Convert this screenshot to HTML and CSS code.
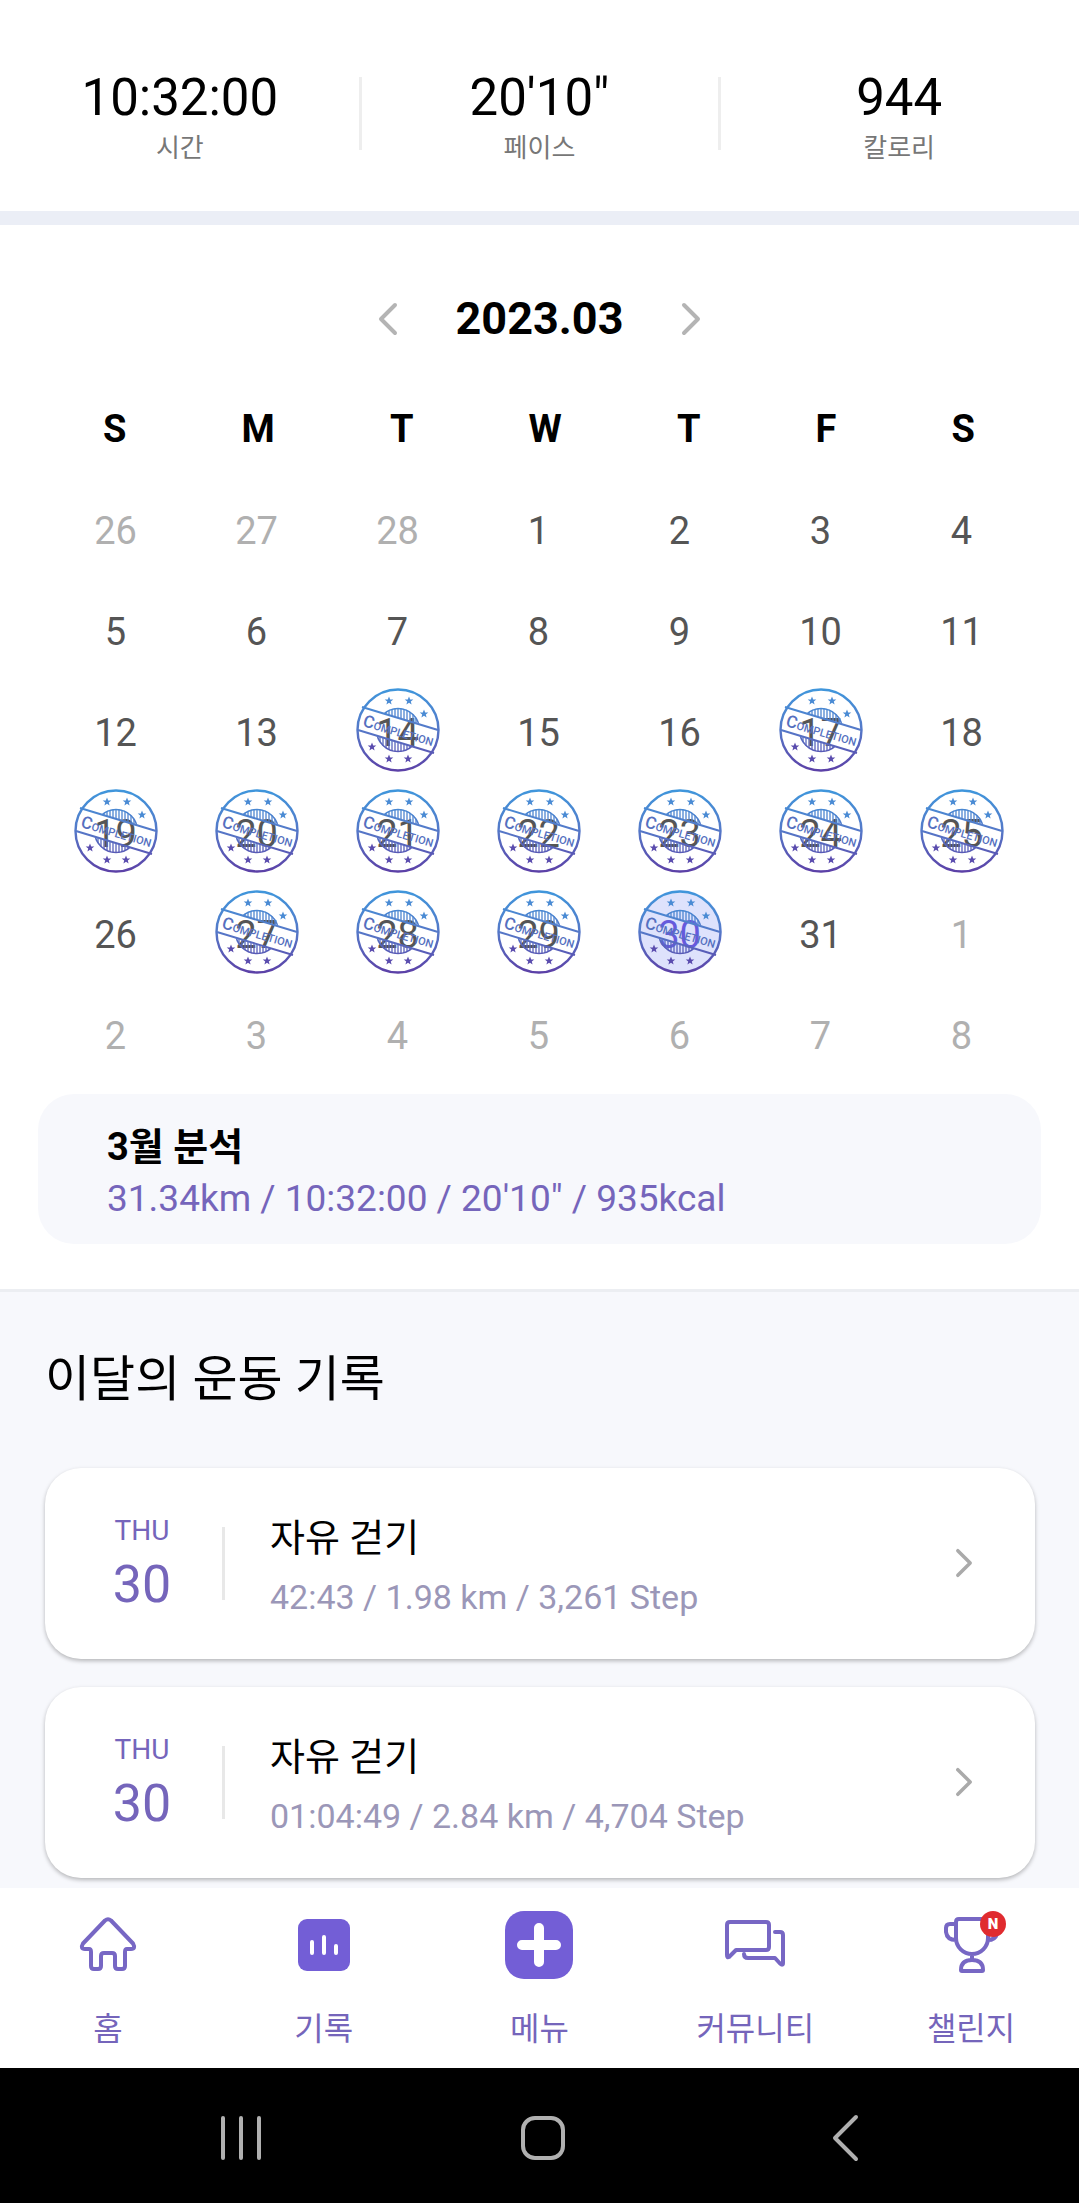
FILE: index.html
```html
<!DOCTYPE html>
<html lang="ko">
<head>
<meta charset="utf-8">
<meta name="viewport" content="width=device-width, initial-scale=1">
<title>운동 기록</title>
<link rel="stylesheet" href="styles.css">
</head>
<body>
<svg class="defs" aria-hidden="true">
  <defs>
    <linearGradient id="ink" gradientUnits="userSpaceOnUse" x1="0" y1="0" x2="0" y2="84">
      <stop offset="0" stop-color="#3f97dc"/>
      <stop offset="0.5" stop-color="#5578c8"/>
      <stop offset="1" stop-color="#5c3fa6"/>
    </linearGradient>
    <clipPath id="outside-band"><path d="M0 0H84V42L0 17ZM0 42L84 67V84H0Z"/></clipPath>
    <clipPath id="seal"><circle cx="42" cy="42" r="22"/></clipPath>
    <path id="star" d="M0-4.500L1.200-1.500L4.300-1.400L1.800 .6L2.600 3.600L0 1.800L-2.600 3.600L-1.800 .6L-4.300-1.400L-1.200-1.500Z"/>
    <symbol id="stamp" viewBox="0 0 84 84">
      <g fill="none" stroke="url(#ink)">
        <circle cx="42" cy="42" r="40.500" stroke-width="2.400"/>
        <path d="M6 19L82 42M2 42L78 65" stroke-width="2"/>
        <g clip-path="url(#outside-band)">
          <circle cx="42" cy="42" r="21.500" stroke-width="1.600"/>
          <path clip-path="url(#seal)" stroke-width="1.300" d="M24 20V64M27 20V64M30 20V64M33 20V64M36 20V64M39 20V64M42 20V64M45 20V64M48 20V64M51 20V64M54 20V64M57 20V64M60 20V64"/>
        </g>
      </g>
      <g fill="#4a8bd4">
        <use href="#star" x="33" y="13"/><use href="#star" x="53" y="13"/><use href="#star" x="68" y="26"/>
      </g>
      <g fill="#5a4cae">
        <use href="#star" x="16" y="59"/><use href="#star" x="33" y="71"/><use href="#star" x="52" y="71"/>
      </g>
      <text class="stamp-text" transform="translate(6 38) rotate(16)"><tspan class="stamp-initial">C</tspan>OMPLETION</text>
    </symbol>
    <symbol id="chevron" viewBox="0 0 20 34"><path d="M3 3L17 17L3 31" fill="none" stroke="currentColor" stroke-width="4" stroke-linecap="round" stroke-linejoin="round"/></symbol>
  </defs>
</svg>

<main>
  <dl class="stats">
    <div class="stat"><dt>시간</dt><dd>10:32:00</dd></div>
    <div class="stat"><dt>페이스</dt><dd>20'10"</dd></div>
    <div class="stat"><dt>칼로리</dt><dd>944</dd></div>
  </dl>

  <section class="calendar">
    <header class="month">
      <button class="month-step" type="button" aria-label="이전 달"><svg class="flip"><use href="#chevron"/></svg></button>
      <h1>2023.03</h1>
      <button class="month-step" type="button" aria-label="다음 달"><svg><use href="#chevron"/></svg></button>
    </header>
    <table>
      <thead>
        <tr><th>S</th><th>M</th><th>T</th><th>W</th><th>T</th><th>F</th><th>S</th></tr>
      </thead>
      <tbody>
        <tr><td class="other">26</td><td class="other">27</td><td class="other">28</td><td>1</td><td>2</td><td>3</td><td>4</td></tr>
        <tr><td>5</td><td>6</td><td>7</td><td>8</td><td>9</td><td>10</td><td>11</td></tr>
        <tr><td>12</td><td>13</td><td>14<svg class="stamp"><use href="#stamp"/></svg></td><td>15</td><td>16</td><td>17<svg class="stamp"><use href="#stamp"/></svg></td><td>18</td></tr>
        <tr><td>19<svg class="stamp"><use href="#stamp"/></svg></td><td>20<svg class="stamp"><use href="#stamp"/></svg></td><td>21<svg class="stamp"><use href="#stamp"/></svg></td><td>22<svg class="stamp"><use href="#stamp"/></svg></td><td>23<svg class="stamp"><use href="#stamp"/></svg></td><td>24<svg class="stamp"><use href="#stamp"/></svg></td><td>25<svg class="stamp"><use href="#stamp"/></svg></td></tr>
        <tr><td>26</td><td>27<svg class="stamp"><use href="#stamp"/></svg></td><td>28<svg class="stamp"><use href="#stamp"/></svg></td><td>29<svg class="stamp"><use href="#stamp"/></svg></td><td class="today">30<svg class="stamp"><use href="#stamp"/></svg></td><td>31</td><td class="other">1</td></tr>
        <tr><td class="other">2</td><td class="other">3</td><td class="other">4</td><td class="other">5</td><td class="other">6</td><td class="other">7</td><td class="other">8</td></tr>
      </tbody>
    </table>
    <div class="analysis">
      <h2>3월 분석</h2>
      <p>31.34km / 10:32:00 / 20'10" / 935kcal</p>
    </div>
  </section>

  <section class="records">
    <h2>이달의 운동 기록</h2>
    <a class="record" href="#">
      <span class="date"><span class="weekday">THU</span><span class="day">30</span></span>
      <span class="info"><span class="title">자유 걷기</span><span class="detail">42:43 / 1.98 km / 3,261 Step</span></span>
      <svg class="go" aria-hidden="true"><use href="#chevron"/></svg>
    </a>
    <a class="record" href="#">
      <span class="date"><span class="weekday">THU</span><span class="day">30</span></span>
      <span class="info"><span class="title">자유 걷기</span><span class="detail">01:04:49 / 2.84 km / 4,704 Step</span></span>
      <svg class="go" aria-hidden="true"><use href="#chevron"/></svg>
    </a>
  </section>
</main>

<nav class="tabs">
  <a href="#">
    <svg width="56" height="68" viewBox="0 -5 56 68"><path class="line" d="M25 4.500Q28 2 31 4.500L53 27.500Q56 33 51 33H47Q45 33 45 36V50Q45 53 42 53H38Q35 53 35 50V40Q35 37 32 37H24Q21 37 21 40V50Q21 53 18 53H14Q11 53 11 50V36Q11 33 9 33H5Q0 33 3 27.500Z"/></svg>
    <span>홈</span>
  </a>
  <a href="#">
    <svg width="52" height="68" viewBox="0 -8 52 68"><rect width="52" height="52" rx="9" fill="#735ed6"/><path d="M14 23V34M26 18V34M38 27V34" stroke="#fff" stroke-width="4" stroke-linecap="round"/></svg>
    <span>기록</span>
  </a>
  <a href="#">
    <svg width="68" height="68" viewBox="0 0 68 68"><rect width="68" height="68" rx="19" fill="#735ed6"/><path d="M17 34H51M34 17V51" stroke="#fff" stroke-width="10" stroke-linecap="round"/></svg>
    <span>메뉴</span>
  </a>
  <a href="#">
    <svg width="64" height="68" viewBox="0 -7 64 68"><path class="line" d="M7 4H43Q46 4 46 7V29Q46 32 43 32H13L6 39Q4 40 4 37V7Q4 4 7 4ZM52 14H57Q60 14 60 17V45Q60 48 57 45.500L52 40H25Q21 40 21 36"/></svg>
    <span>커뮤니티</span>
  </a>
  <a href="#">
    <svg width="60" height="68" viewBox="0 2 60 68"><path class="line" d="M18 10H44Q47 10 47 13V29A16 16 0 0 1 15 29V13Q15 10 18 10ZM15 15H9Q5 15 5 19V23Q6 31 15 31M47 31Q54 31 56 25M31 45V51M20 61Q20 51 31 51Q42 51 42 61Q42 62 41 62H21Q20 62 20 61Z"/><circle cx="52" cy="15" r="13" fill="#e02b2f"/><text class="badge" x="52" y="20">N</text></svg>
    <span>챌린지</span>
  </a>
</nav>

<div class="system">
  <button type="button" aria-label="최근 앱"><svg viewBox="0 0 46 46"><path d="M5 3V43M23 3V43M41 3V43"/></svg></button>
  <button type="button" aria-label="홈 화면"><svg viewBox="0 0 46 46"><rect x="3" y="3" width="40" height="40" rx="12"/></svg></button>
  <button type="button" aria-label="뒤로"><svg viewBox="0 0 46 46"><path d="M34 2L13 23L34 44"/></svg></button>
</div>
</body>
</html>
```

FILE: styles.css
```css
* {
  box-sizing: border-box;
}

body {
  margin: 0;
  min-height: 100vh;
  display: flex;
  flex-direction: column;
  background: #fff;
  color: #000;
  font-family: Roboto, "Noto Sans CJK KR", sans-serif;
}

h1, h2, p, dl, dd {
  margin: 0;
}

button {
  border: 0;
  padding: 0;
  background: none;
  color: inherit;
  font: inherit;
}

a {
  color: inherit;
  text-decoration: none;
}

svg {
  display: block;
  overflow: visible;
}

.defs {
  position: absolute;
  width: 0;
  height: 0;
}

main {
  flex: 1;
  display: flex;
  flex-direction: column;
}

/* Totals */
.stats {
  display: grid;
  grid-template-columns: repeat(3, 1fr);
  padding: 68px 0 43px;
  border-bottom: 14px solid #ebeef6;
}

.stat {
  display: flex;
  flex-direction: column-reverse;
  position: relative;
  text-align: center;
}

.stat + .stat::before {
  content: "";
  position: absolute;
  left: -1px;
  top: 9px;
  width: 3px;
  height: 73px;
  background: #eee;
}

.stat dd {
  font-size: 51px;
  line-height: 60px;
}

.stat dt {
  font-size: 26px;
  line-height: 40px;
  color: #777;
}

/* Calendar */
.calendar {
  padding: 64px 38px 45px;
  border-bottom: 3px solid #eceef2;
}

.month {
  display: flex;
  justify-content: center;
  align-items: center;
  gap: 58px;
  margin-bottom: 50px;
}

.month h1 {
  font-size: 45px;
  line-height: 60px;
}

.month-step {
  color: #b4b4b4;
}

.month-step svg {
  width: 20px;
  height: 34px;
}

.flip {
  transform: scaleX(-1);
}

table, thead, tbody {
  display: block;
}

thead tr {
  display: flex;
  justify-content: space-between;
  padding: 0 66px 0 65px;
  margin-bottom: 22px;
}

tbody tr {
  display: grid;
  grid-template-columns: repeat(7, 1fr);
  padding: 0 9px 0 7px;
}

th, td {
  padding: 0;
  font-size: 38px;
  text-align: center;
}

th {
  line-height: 60px;
}

td {
  position: relative;
  line-height: 101px;
  color: #555;
}

.other {
  color: #b0b0b0;
}

.stamp {
  position: absolute;
  left: calc(50% - 42px);
  top: 5px;
  width: 84px;
  height: 84px;
  border-radius: 50%;
}

.today {
  color: #6a55d8;
}

.today .stamp {
  background: #5a6cf033;
}

.stamp-text {
  fill: #5570c0;
  font-size: 11px;
  font-weight: 500;
}

.stamp-initial {
  font-size: 17px;
}

.analysis {
  margin-top: 7px;
  padding: 27px 69px 19px;
  border-radius: 36px;
  background: #f7f8fc;
}

.analysis h2 {
  font-size: 38px;
  line-height: 52px;
}

.analysis p {
  font-size: 37px;
  line-height: 52px;
  color: #7565bb;
}

/* Record list */
.records {
  flex: 1;
  display: flex;
  flex-direction: column;
  gap: 28px;
  padding: 58px 44px 8px 45px;
  background: #f7f8fc;
}

.records h2 {
  margin-bottom: 30px;
  font-size: 49px;
  font-weight: 400;
  line-height: 60px;
}

.record {
  display: flex;
  align-items: flex-start;
  padding: 46px 62px 38px 49px;
  border-radius: 36px;
  background: #fff;
  box-shadow: 0 2px 4px #0004;
}

.date, .info {
  display: flex;
  flex-direction: column;
}

.date {
  position: relative;
  width: 96px;
  gap: 8px;
  padding-top: 1px;
  text-align: center;
  color: #7565bb;
}

.date::after {
  content: "";
  position: absolute;
  right: -35px;
  top: 13px;
  width: 3px;
  height: 73px;
  background: #e8e8e8;
}

.weekday {
  font-size: 28px;
  line-height: 32px;
}

.day {
  font-size: 52px;
  line-height: 60px;
}

.info {
  flex: 1;
  gap: 11px;
  padding-left: 80px;
}

.title {
  font-size: 38px;
  line-height: 48px;
}

.detail {
  font-size: 34px;
  line-height: 48px;
  color: #9b97b8;
}

.go {
  width: 18px;
  height: 30px;
  margin-top: 34px;
  color: #aaa;
}

/* Bottom tabs */
.tabs {
  display: grid;
  grid-template-columns: repeat(5, 1fr);
  padding: 23px 0 17px;
  background: #fff;
  color: #7565bb;
}

.tabs a {
  display: flex;
  flex-direction: column;
  align-items: center;
  gap: 28px;
  font-size: 32px;
  line-height: 44px;
}

.line {
  fill: none;
  stroke: #7767c4;
  stroke-width: 4;
  stroke-linecap: round;
  stroke-linejoin: round;
}

.badge {
  fill: #fff;
  font-size: 15px;
  font-weight: 900;
  text-anchor: middle;
}

.system {
  display: flex;
  justify-content: center;
  gap: 256px;
  padding: 47px 0 42px 6px;
  background: #000;
}

.system svg {
  width: 46px;
  height: 46px;
  fill: none;
  stroke: #b0b0b0;
  stroke-width: 4;
  stroke-linecap: round;
  stroke-linejoin: round;
}
```
